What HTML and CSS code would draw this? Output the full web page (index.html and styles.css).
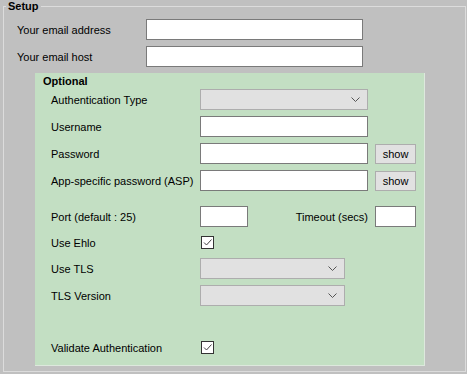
FILE: index.html
```html
<!DOCTYPE html>
<html>
<head>
<meta charset="utf-8">
<link rel="stylesheet" href="styles.css">
</head>
<body>
<fieldset class="setup">
  <legend>Setup</legend>
  <div class="form">
    <div class="row">
      <span class="lbl-outer">Your email address</span>
      <span class="text w-email"></span>
    </div>
    <div class="row">
      <span class="lbl-outer">Your email host</span>
      <span class="text w-email"></span>
    </div>
    <div class="optional">
      <div class="opt-title">Optional</div>
      <div class="form">
        <div class="row">
          <span class="lbl">Authentication Type</span>
          <span class="select w-long"><svg class="chev" width="9" height="5" viewBox="0 0 9 5"><polyline points="0.5,0.5 4.5,4.5 8.5,0.5" fill="none" stroke="#555" stroke-width="1"/></svg></span>
        </div>
        <div class="row">
          <span class="lbl">Username</span>
          <span class="text w-long"></span>
        </div>
        <div class="row">
          <span class="lbl">Password</span>
          <span class="text w-long"></span>
          <span class="btn">show</span>
        </div>
        <div class="row">
          <span class="lbl">App-specific password (ASP)</span>
          <span class="text w-long"></span>
          <span class="btn">show</span>
        </div>
        <div class="row row-port">
          <span class="lbl">Port (default : 25)</span>
          <span class="text w-port"></span>
          <span class="lbl-timeout">Timeout (secs)</span>
          <span class="text w-timeout"></span>
        </div>
        <div class="row row-check">
          <span class="lbl">Use Ehlo</span>
          <span class="check"><svg width="11" height="11" viewBox="0 0 11 11"><polyline points="2,5.5 4.5,8 9.5,2.5" fill="none" stroke="#444" stroke-width="1"/></svg></span>
        </div>
        <div class="row">
          <span class="lbl">Use TLS</span>
          <span class="select w-short"><svg class="chev" width="9" height="5" viewBox="0 0 9 5"><polyline points="0.5,0.5 4.5,4.5 8.5,0.5" fill="none" stroke="#555" stroke-width="1"/></svg></span>
        </div>
        <div class="row">
          <span class="lbl">TLS Version</span>
          <span class="select w-short"><svg class="chev" width="9" height="5" viewBox="0 0 9 5"><polyline points="0.5,0.5 4.5,4.5 8.5,0.5" fill="none" stroke="#555" stroke-width="1"/></svg></span>
        </div>
        <div class="row row-check row-validate">
          <span class="lbl">Validate Authentication</span>
          <span class="check"><svg width="11" height="11" viewBox="0 0 11 11"><polyline points="2,5.5 4.5,8 9.5,2.5" fill="none" stroke="#444" stroke-width="1"/></svg></span>
        </div>
      </div>
    </div>
  </div>
</fieldset>
</body>
</html>
```
FILE: styles.css
```css
* { box-sizing: border-box; }

body {
  margin: 0;
  width: 467px;
  height: 374px;
  overflow: hidden;
  background: #c0c0c0;
  color: #000;
  font: 11px "Liberation Sans", Arial, sans-serif;
}

.setup {
  margin: 0 1px 0 3px;
  padding: 6px 0 0 13px;
  height: 372px;
  border: 1px solid #dcdcdc;
  min-width: 0;
}

.setup legend {
  font-weight: bold;
  line-height: 13px;
  padding: 0 2px;
  margin-left: -11px;
}

.form {
  display: flex;
  flex-direction: column;
  gap: 6px;
}

.row {
  display: flex;
  align-items: center;
  height: 21px;
}

.lbl-outer { width: 129px; white-space: nowrap; }
.lbl { width: 149px; white-space: nowrap; }

.text {
  display: block;
  height: 21px;
  background: #fff;
  border: 1px solid #7a7a7a;
}

.w-email { width: 217px; }
.w-long { width: 168px; }
.w-short { width: 145px; }
.w-port { width: 48px; }
.w-timeout { width: 41px; margin-left: 7px; }

.select {
  display: flex;
  align-items: center;
  justify-content: flex-end;
  height: 21px;
  padding-right: 7px;
  background: #e1e1e1;
  border: 1px solid #adadad;
}

.chev { display: block; }

.btn {
  display: flex;
  align-items: center;
  justify-content: center;
  width: 41px;
  height: 20px;
  margin-left: 7px;
  background: #e1e1e1;
  border: 1px solid #adadad;
  font-size: 11px;
}

.optional {
  margin-left: 18px;
  width: 390px;
  height: 293px;
  padding: 1px 8px 0 16px;
  background: #c3dfc3;
  border-right: 1px solid #dde8dd;
  border-bottom: 1px solid #dde8dd;
}

.opt-title {
  font-weight: bold;
  line-height: 15px;
  margin-left: -8px;
}

.row-port { margin-top: 9px; }

.lbl-timeout { margin-left: auto; white-space: nowrap; }

.row-check { height: 19px; }
.row-validate { margin-top: 26px; }

.check {
  display: flex;
  align-items: center;
  justify-content: center;
  width: 13px;
  height: 13px;
  margin-left: 1px;
  background: #fff;
  border: 1px solid #333;
}

.check svg { display: block; }
```
